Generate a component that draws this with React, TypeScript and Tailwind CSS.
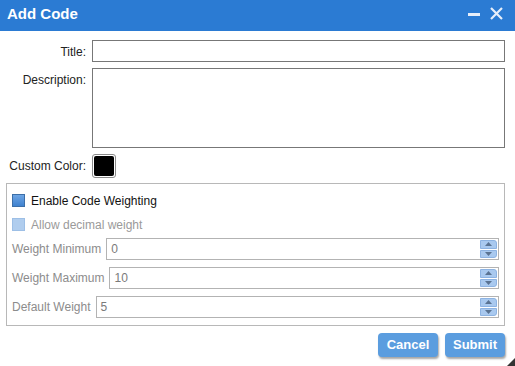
import React from "react";

function Spinner() {
  return (
    <div className="absolute right-[1px] top-[1px] bottom-[1px] w-[17px] flex flex-col gap-[1px]">
      <div className="flex-1 bg-[#a9c9ef] border border-[#8db3e2] rounded-tr-[3px] flex items-center justify-center">
        <svg width="7" height="4" viewBox="0 0 7 4"><path d="M0 4 L3.5 0 L7 4 Z" fill="#5a7392" /></svg>
      </div>
      <div className="flex-1 bg-[#a9c9ef] border border-[#8db3e2] rounded-br-[3px] flex items-center justify-center">
        <svg width="7" height="4" viewBox="0 0 7 4"><path d="M0 0 L3.5 4 L7 0 Z" fill="#5a7392" /></svg>
      </div>
    </div>
  );
}

function NumRow({ label, value }: { label: string; value: string }) {
  return (
    <div className="flex items-center gap-[5px] h-[22px]">
      <span className="text-[12px] text-[#8c8c8c] whitespace-nowrap">{label}</span>
      <div className="relative flex-1 h-[22px] border border-[#b3b3b3] bg-white flex items-center pl-[4px]">
        <span className="text-[12px] text-[#7a7a7a]">{value}</span>
        <Spinner />
      </div>
    </div>
  );
}

export default function App() {
  return (
    <div className="relative w-[515px] h-[366px] bg-white overflow-hidden font-['Liberation_Sans',Arial,sans-serif]">
      <div className="h-[31px] bg-[#2b7bd3] flex items-center justify-between pl-[7px] pr-[12px] pb-[4px]">
        <span className="text-white font-bold text-[15px] leading-none">Add Code</span>
        <div className="flex items-center gap-[10px]">
          <svg width="12" height="12" viewBox="0 0 12 12"><rect x="0" y="5" width="12" height="3" fill="#e6eefa" /></svg>
          <svg width="13" height="13" viewBox="0 0 13 13"><path d="M1 1 L12 12 M12 1 L1 12" stroke="#e6eefa" strokeWidth="2.2" /></svg>
        </div>
      </div>

      <div className="pt-[9px] pl-[6px] pr-[10px]">
        <div className="grid grid-cols-[80px_1fr] gap-x-[6px] gap-y-[6px] items-start">
          <span className="text-[12px] text-[#222] text-right pt-[3px]">Title:</span>
          <div className="h-[22px] border border-[#777] bg-white" />
          <span className="text-[12px] text-[#222] text-right pt-[3px]">Description:</span>
          <div className="h-[80px] border border-[#777] bg-white" />
          <span className="text-[12px] text-[#222] text-right self-center whitespace-nowrap">Custom Color:</span>
          <div className="w-[24px] h-[24px] border border-[#8a8a8a] rounded-[3px] p-[1px] bg-white">
            <div className="w-full h-full bg-black rounded-[2px]" />
          </div>
        </div>

        <div className="mt-[5px] border border-[#b8b8b8] h-[143px] pl-[5px] pr-[5px] pt-[10px]">
          <div className="flex items-center gap-[6px] h-[13px]">
            <div className="w-[13px] h-[13px] border border-[#3c6fa8] bg-gradient-to-b from-[#6ea5e4] to-[#3f82cf]" />
            <span className="text-[12px] text-[#111]">Enable Code Weighting</span>
          </div>
          <div className="flex items-center gap-[6px] h-[13px] mt-[11px]">
            <div className="w-[13px] h-[13px] border border-[#9dbfe6] bg-[#b0cdee]" />
            <span className="text-[12px] text-[#9a9a9a]">Allow decimal weight</span>
          </div>
          <div className="mt-[7px] flex flex-col gap-[7px]">
            <NumRow label="Weight Minimum" value="0" />
            <NumRow label="Weight Maximum" value="10" />
            <NumRow label="Default Weight" value="5" />
          </div>
        </div>

        <div className="flex justify-end gap-[7px] mt-[7px]">
          <button className="w-[60px] h-[24px] rounded-[4px] bg-[#5b9ddf] text-white font-bold text-[13px] shadow-[1px_2px_2px_rgba(0,0,0,0.35)]">Cancel</button>
          <button className="w-[60px] h-[24px] rounded-[4px] bg-[#5b9ddf] text-white font-bold text-[13px] shadow-[1px_2px_2px_rgba(0,0,0,0.35)]">Submit</button>
        </div>
      </div>

      <svg className="absolute right-0 bottom-0" width="8" height="8" viewBox="0 0 8 8"><path d="M8 0 L8 8 L0 8 Z" fill="#333" /></svg>
    </div>
  );
}
